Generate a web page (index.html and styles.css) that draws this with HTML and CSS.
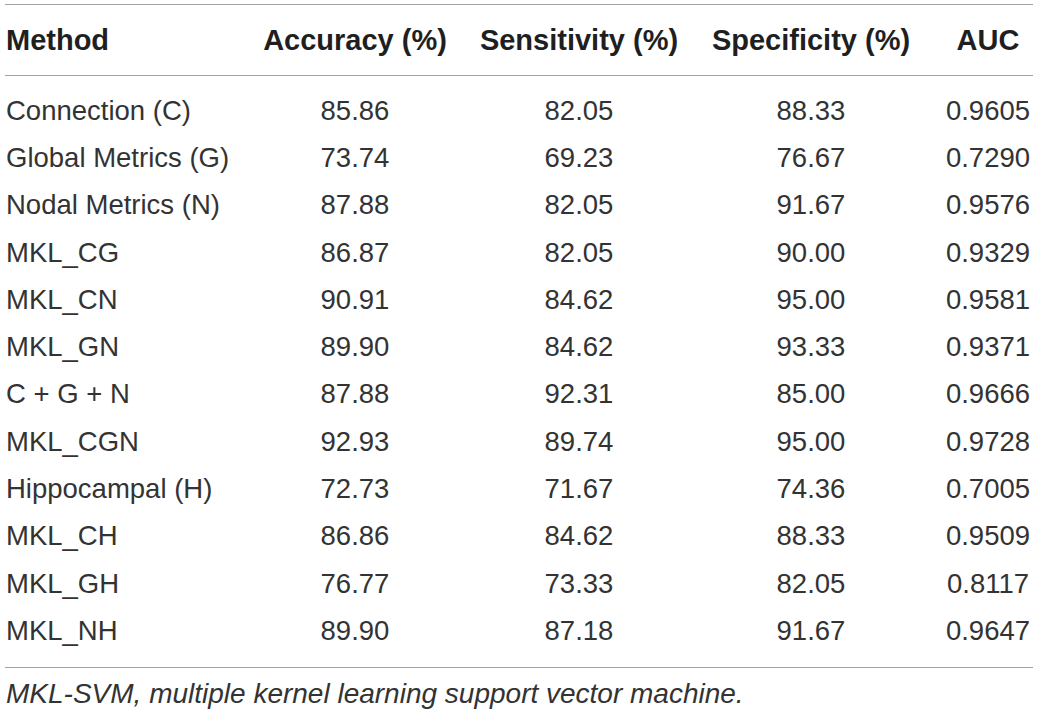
FILE: index.html
```html
<!DOCTYPE html>
<html>
<head>
<meta charset="utf-8">
<link rel="stylesheet" href="styles.css">
</head>
<body>
<div class="wrap">
<table class="results">
  <colgroup>
    <col class="c-method">
    <col class="c-acc">
    <col class="c-sens">
    <col class="c-spec">
    <col class="c-auc">
  </colgroup>
  <thead>
    <tr>
      <th class="left">Method</th>
      <th>Accuracy (%)</th>
      <th>Sensitivity (%)</th>
      <th>Specificity (%)</th>
      <th>AUC</th>
    </tr>
  </thead>
  <tbody>
    <tr class="first"><td class="left">Connection (C)</td><td>85.86</td><td>82.05</td><td>88.33</td><td>0.9605</td></tr>
    <tr><td class="left">Global Metrics (G)</td><td>73.74</td><td>69.23</td><td>76.67</td><td>0.7290</td></tr>
    <tr><td class="left">Nodal Metrics (N)</td><td>87.88</td><td>82.05</td><td>91.67</td><td>0.9576</td></tr>
    <tr><td class="left">MKL_CG</td><td>86.87</td><td>82.05</td><td>90.00</td><td>0.9329</td></tr>
    <tr><td class="left">MKL_CN</td><td>90.91</td><td>84.62</td><td>95.00</td><td>0.9581</td></tr>
    <tr><td class="left">MKL_GN</td><td>89.90</td><td>84.62</td><td>93.33</td><td>0.9371</td></tr>
    <tr><td class="left">C + G + N</td><td>87.88</td><td>92.31</td><td>85.00</td><td>0.9666</td></tr>
    <tr><td class="left">MKL_CGN</td><td>92.93</td><td>89.74</td><td>95.00</td><td>0.9728</td></tr>
    <tr><td class="left">Hippocampal (H)</td><td>72.73</td><td>71.67</td><td>74.36</td><td>0.7005</td></tr>
    <tr><td class="left">MKL_CH</td><td>86.86</td><td>84.62</td><td>88.33</td><td>0.9509</td></tr>
    <tr><td class="left">MKL_GH</td><td>76.77</td><td>73.33</td><td>82.05</td><td>0.8117</td></tr>
    <tr class="last"><td class="left">MKL_NH</td><td>89.90</td><td>87.18</td><td>91.67</td><td>0.9647</td></tr>
  </tbody>
</table>
<p class="note">MKL-SVM, multiple kernel learning support vector machine.</p>
</div>
</body>
</html>
```

FILE: styles.css
```css
html, body {
  margin: 0;
  padding: 0;
  background: #ffffff;
}

.wrap {
  padding: 4px 0 0 5px;
  font-family: "Liberation Sans", Arial, sans-serif;
  color: #333333;
}

.results {
  border-collapse: collapse;
  table-layout: fixed;
  width: 1028px;
}

.c-method { width: 226px; }
.c-acc { width: 248px; }
.c-sens { width: 200px; }
.c-spec { width: 264px; }
.c-auc { width: 90px; }

.results thead th {
  border-top: 1.5px solid #a3a3a3;
  border-bottom: 1.5px solid #a3a3a3;
  height: 70px;
  padding: 0;
  font-size: 29px;
  font-weight: bold;
  color: #1f1f1f;
  text-align: center;
  vertical-align: middle;
  white-space: nowrap;
}

.results td {
  padding: 0;
  height: 47.3px;
  font-size: 27.5px;
  text-align: center;
  vertical-align: middle;
  white-space: nowrap;
}

.results .left {
  text-align: left;
  padding-left: 1px;
}

.results tr.first td {
  padding-top: 11px;
}

.results tr.last td {
  padding-bottom: 12px;
  border-bottom: 1.5px solid #a3a3a3;
}

.note {
  margin: 0;
  padding: 9px 0 0 1px;
  font-size: 28px;
  font-style: italic;
  line-height: 34px;
}
```
